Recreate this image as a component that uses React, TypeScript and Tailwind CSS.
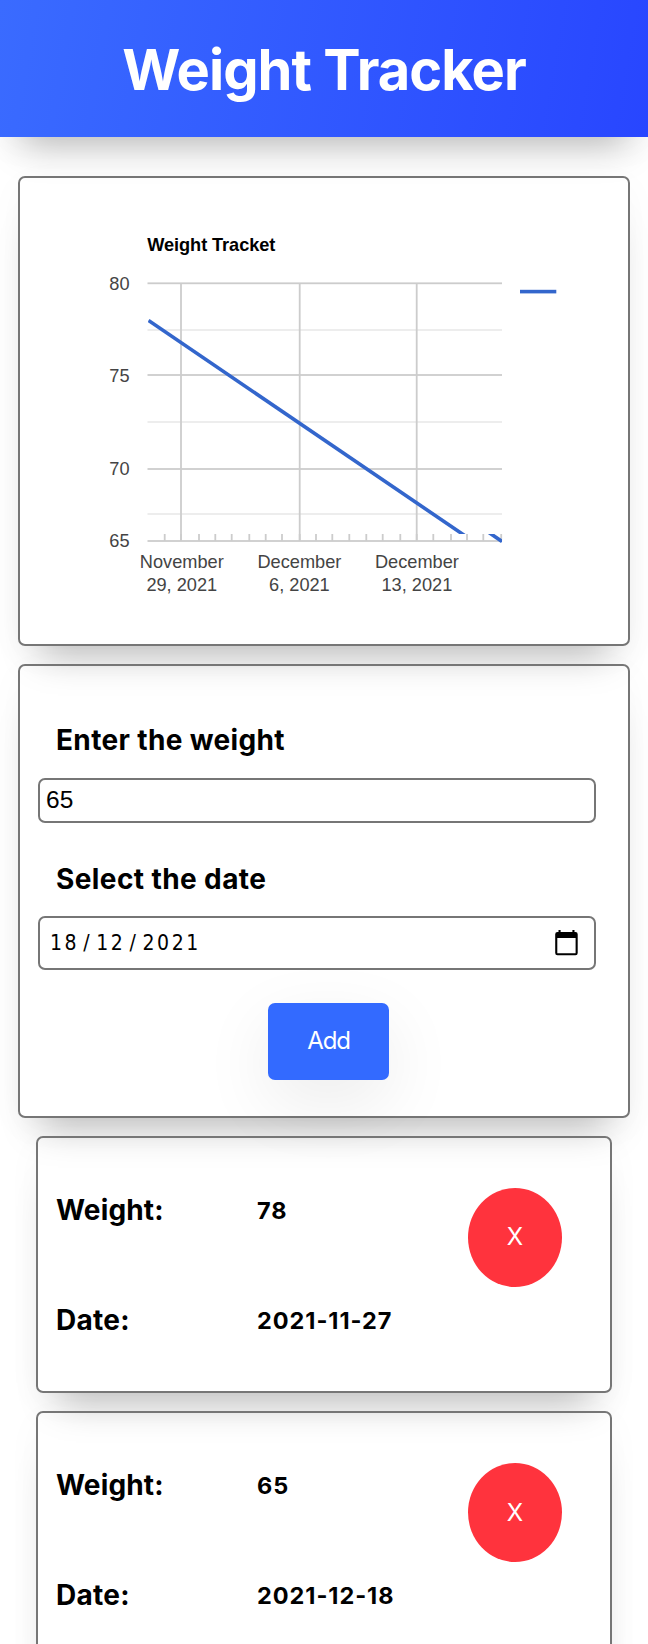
import React from "react";

const SHADOW =
  "shadow-[0_30px_37px_-22px_rgba(0,0,0,0.27),0_9px_37px_0_rgba(0,0,0,0.03)]";

const ticks = [
  164.7, 181, 199, 215.3, 231.7, 249.3, 265.7, 282, 299.7, 316, 332.3, 349.3,
  366.3, 382.7, 400.3, 416.7, 433.3, 451, 467, 483.3, 501.2,
];

const xLabels = [
  { x: 181.8, top: "November", bottom: "29, 2021" },
  { x: 299.4, top: "December", bottom: "6, 2021" },
  { x: 416.9, top: "December", bottom: "13, 2021" },
];

const yLabels = [
  { y: 290, text: "80" },
  { y: 382, text: "75" },
  { y: 475, text: "70" },
  { y: 547, text: "65" },
];

function WeightChart() {
  return (
    <svg
      width="480"
      height="400"
      viewBox="100 220 480 400"
      fontFamily="'Liberation Sans', Arial, sans-serif"
      fontSize="18.2"
      fill="#444444"
    >
      <defs>
        <clipPath id="plot-area">
          <rect x="148" y="280" width="354" height="254" />
        </clipPath>
        <clipPath id="axis-area">
          <rect x="148" y="534" width="354" height="9" />
        </clipPath>
      </defs>
      <text x="147.3" y="251" fontWeight="bold" fill="#000000" textLength="128">
        Weight Tracket
      </text>
      {[330, 422, 514].map((y) => (
        <rect key={y} x="147.5" y={y - 0.9} width="354.5" height="1.8" fill="#ebebeb" />
      ))}
      {[283.3, 375, 469, 541].map((y) => (
        <rect key={y} x="147.5" y={y - 0.9} width="354.5" height="1.8" fill="#cccccc" />
      ))}
      {[181, 299.7, 416.7].map((x) => (
        <rect key={x} x={x - 0.9} y="283" width="1.8" height="258" fill="#cccccc" />
      ))}
      {ticks.map((x) => (
        <rect key={x} x={x - 0.9} y="534" width="1.8" height="7" fill="#cccccc" />
      ))}
      <path
        d="M148.5 320.5L469 538.5"
        stroke="#3366cc"
        strokeWidth="3.6"
        clipPath="url(#plot-area)"
      />
      <path
        d="M484 529.2L502 541.4"
        stroke="#3366cc"
        strokeWidth="3.6"
        clipPath="url(#axis-area)"
      />
      <rect x="520" y="289.8" width="36.3" height="3.6" fill="#3366cc" />
      {yLabels.map((l) => (
        <text key={l.text} x="129.5" y={l.y} textAnchor="end">
          {l.text}
        </text>
      ))}
      {xLabels.map((l) => (
        <g key={l.x} textAnchor="middle">
          <text x={l.x} y="568">
            {l.top}
          </text>
          <text x={l.x} y="591">
            {l.bottom}
          </text>
        </g>
      ))}
    </svg>
  );
}

function CalendarIcon() {
  return (
    <svg width="23" height="26" viewBox="0 0 23 26">
      <path
        fillRule="evenodd"
        d="M3.5 0H5.6V2H17.4V0H19.5V2H20.5A2.3 2.3 0 0 1 22.7 4.3V22.9A2.3 2.3 0 0 1 20.5 25.2H2.5A2.3 2.3 0 0 1 .2 22.9V4.3A2.3 2.3 0 0 1 2.5 2H3.5ZM2.3 8V23.2H20.6V8Z"
      />
    </svg>
  );
}

function Entry({ weight, date }: { weight: string; date: string }) {
  return (
    <div
      className={`mx-[36px] flex h-[257.5px] shrink-0 justify-between rounded-[7px] border-2 border-[#767676] pl-[18px] pr-[48px] ${SHADOW}`}
    >
      <div className="grid grid-cols-[201px_auto] grid-rows-[110px_110px] content-start pt-[17px] font-bold">
        <div className="flex items-center text-[28px] tracking-[0.15px]">Weight:</div>
        <div className="flex items-center pt-[2px] text-[23.5px] tracking-[0.95px]">{weight}</div>
        <div className="flex items-center text-[28px] tracking-[0.25px]">Date:</div>
        <div className="flex items-center pt-[2px] text-[23.5px] tracking-[0.95px]">{date}</div>
      </div>
      <button className="mt-[50px] h-[99px] w-[94px] rounded-[50%] bg-[#ff333d] text-[24px] text-white">
        X
      </button>
    </div>
  );
}

export default function App() {
  return (
    <div className="flex h-[1644px] w-[648px] flex-col overflow-hidden bg-white font-['Inter',sans-serif] text-black">
      <header
        className={`flex h-[136.5px] shrink-0 items-center justify-center bg-linear-[100deg,#3a6bff,#2846ff] pt-[3px] ${SHADOW}`}
      >
        <h1 className="text-[56px] font-bold tracking-[-0.95px] text-white">Weight Tracker</h1>
      </header>

      <section
        className={`mx-[18px] mt-[39.5px] flex h-[469.5px] shrink-0 rounded-[7px] border-2 border-[#767676] pl-[80px] pt-[42px] ${SHADOW}`}
      >
        <WeightChart />
      </section>

      <section
        className={`mx-[18px] mt-[18px] flex h-[454px] shrink-0 flex-col rounded-[7px] border-2 border-[#767676] pl-[18px] ${SHADOW}`}
      >
        <label className="mt-[54px] pl-[18px] text-[28px] font-bold leading-[40px] tracking-[0.35px]">
          Enter the weight
        </label>
        <div className="mt-[18px] flex h-[45px] w-[558px] items-center rounded-[7px] border-2 border-[#767676] pl-[6px] font-['Liberation_Sans',Arial,sans-serif] text-[24.5px]">
          65
        </div>
        <label className="mt-[36px] pl-[18px] text-[28px] font-bold leading-[40px] tracking-[0.4px]">
          Select the date
        </label>
        <div className="mt-[17px] flex h-[54px] w-[558px] items-center justify-between rounded-[7px] border-2 border-[#767676] pl-[10px] pr-[16px] font-['DejaVu_Sans_Condensed','DejaVu_Sans',sans-serif] text-[21px] tracking-[2.5px]">
          <span className="pt-[2px]">
            18<span className="px-[4.2px]">/</span>12<span className="px-[4.2px]">/</span>2021
          </span>
          <CalendarIcon />
        </div>
        <button className="ml-[230px] mt-[33px] h-[77px] w-[121px] rounded-[7px] bg-[#336aff] text-[24px] tracking-[-1.2px] text-white shadow-[0_22px_70px_0_rgba(0,0,0,0.08)]">
          Add
        </button>
      </section>

      <div className="mt-[18px] flex flex-col gap-[18px]">
        <Entry weight="78" date="2021-11-27" />
        <Entry weight="65" date="2021-12-18" />
      </div>
    </div>
  );
}
